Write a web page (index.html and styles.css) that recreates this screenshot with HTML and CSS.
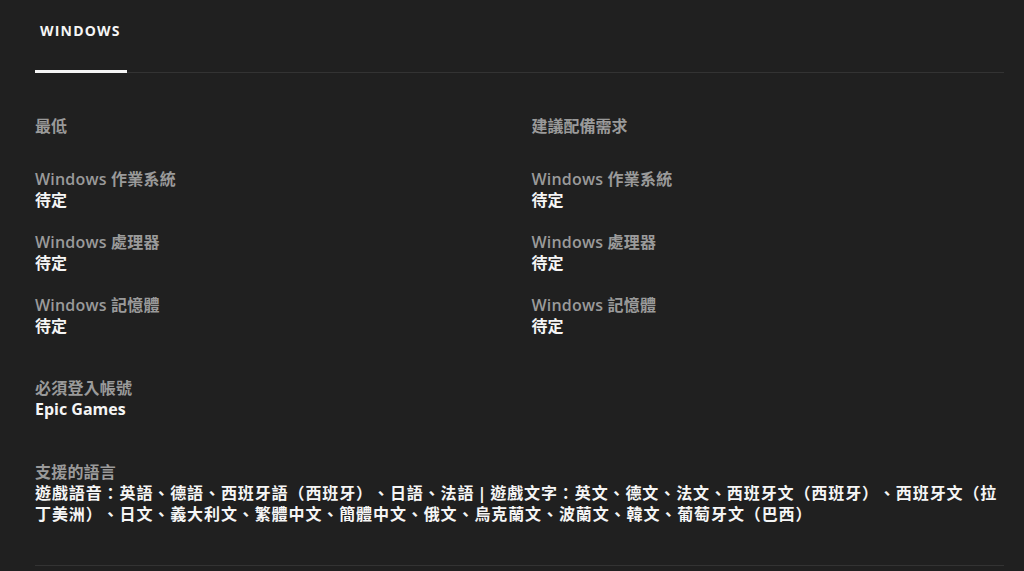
FILE: index.html
```html
<!DOCTYPE html>
<html lang="zh-Hant">
<head>
<meta charset="utf-8">
<title>Windows 系統需求</title>
<link rel="stylesheet" href="styles.css">
</head>
<body>
<div class="page">
  <div class="tabs">
    <div class="tab">WINDOWS</div>
  </div>

  <div class="sysreq">
    <div class="col">
      <div class="heading">最低</div>
      <div class="item"><div class="label">Windows 作業系統</div><div class="value">待定</div></div>
      <div class="item"><div class="label">Windows 處理器</div><div class="value">待定</div></div>
      <div class="item"><div class="label">Windows 記憶體</div><div class="value">待定</div></div>
    </div>
    <div class="col">
      <div class="heading">建議配備需求</div>
      <div class="item"><div class="label">Windows 作業系統</div><div class="value">待定</div></div>
      <div class="item"><div class="label">Windows 處理器</div><div class="value">待定</div></div>
      <div class="item"><div class="label">Windows 記憶體</div><div class="value">待定</div></div>
    </div>
  </div>

  <div class="extra">
    <div class="label">必須登入帳號</div>
    <div class="value">Epic Games</div>
  </div>

  <div class="extra">
    <div class="label">支援的語言</div>
    <div class="value lang">遊戲語音：英語、德語、西班牙語（西班牙）、日語、法語 | 遊戲文字：英文、德文、法文、西班牙文（西班牙）、西班牙文（拉丁美洲）、日文、義大利文、繁體中文、簡體中文、俄文、烏克蘭文、波蘭文、韓文、葡萄牙文（巴西）</div>
  </div>

  <div class="divider"></div>
</div>
</body>
</html>
```

FILE: styles.css
```css
html, body {
  margin: 0;
  padding: 0;
  background: #202020;
}

body {
  font-family: "Open Sans", "Noto Sans CJK TC", sans-serif;
  color: #f5f5f5;
  font-size: 16px;
  line-height: 21px;
}

.page {
  padding: 0 20px 0 35px;
}

.tabs {
  display: flex;
  border-bottom: 1px solid #333333;
  height: 72px;
}

.tab {
  font-size: 14px;
  font-weight: 700;
  letter-spacing: 1.2px;
  line-height: 22px;
  color: #f5f5f5;
  padding: 20px 6px 28px 5px;
  border-bottom: 3px solid #f5f5f5;
  margin-bottom: -1px;
  height: 22px;
}

.sysreq {
  display: grid;
  grid-template-columns: 1fr 1fr;
  column-gap: 24px;
  margin-top: 43px;
}

.heading {
  color: #9a9a9a;
  font-weight: 700;
  margin-bottom: 32px;
}

.item {
  margin-bottom: 21px;
}

.label {
  color: #9a9a9a;
  font-weight: 600;
  letter-spacing: 0.2px;
}

.value {
  color: #f5f5f5;
  font-weight: 700;
}

.extra {
  margin-top: 20px;
  margin-bottom: 21px;
}

.extra + .extra {
  margin-top: 42px;
}

.lang {
  letter-spacing: 0.9px;
  text-spacing-trim: space-all;
  word-spacing: -2px;
}

.divider {
  height: 1px;
  background: #333333;
  margin-top: 40px;
}
```
